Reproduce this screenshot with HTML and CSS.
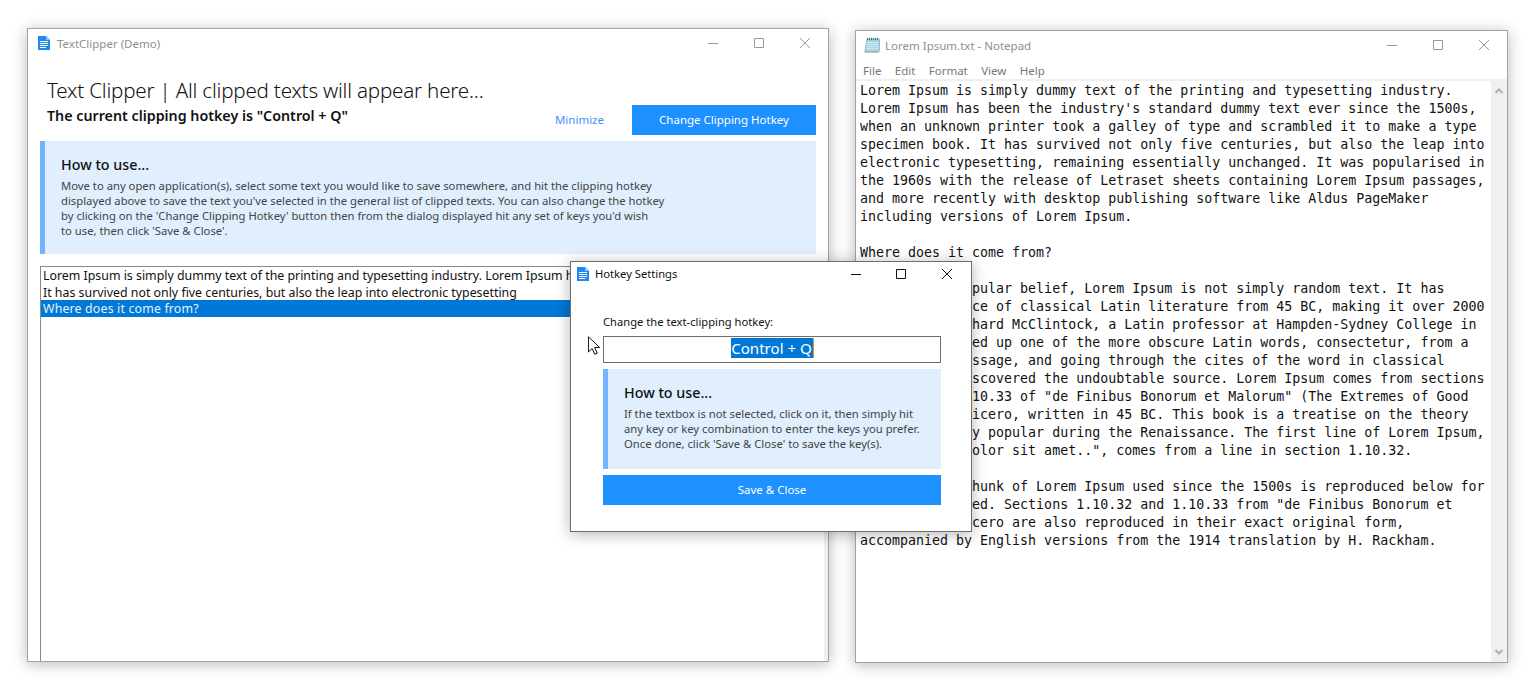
FILE: index.html
```html
<!DOCTYPE html>
<html lang="en">
<head>
<meta charset="utf-8">
<title>TextClipper</title>
<link rel="stylesheet" href="styles.css">
</head>
<body>
<div class="desktop">

  <section class="window main-window">
    <header class="titlebar">
      <svg class="app-icon" viewBox="0 0 12 14"><path d="M0 0h8l4 4v10H0z" fill="#1e88f5"/><path d="M8 0l4 4H8z" fill="#8cc4fb"/><path d="M2 5.500h8M2 7.500h8M2 9.500h8M2 11.500h6" stroke="#fff" stroke-width="1"/></svg>
      <span class="title inactive">TextClipper (Demo)</span>
      <div class="controls inactive-controls">
        <button class="ctl"><svg viewBox="0 0 10 10"><path d="M0 5.500h10"/></svg></button>
        <button class="ctl"><svg viewBox="0 0 10 10"><path d="M.5.5h9v9h-9z"/></svg></button>
        <button class="ctl"><svg viewBox="0 0 10 10"><path d="M0 0l10 10M10 0L0 10"/></svg></button>
      </div>
    </header>
    <div class="main-body">
      <div class="main-head">
        <div class="head-text">
          <h1 class="main-title">Text Clipper | All clipped texts will appear here...</h1>
          <p class="hotkey-line">The current clipping hotkey is "Control + Q"</p>
        </div>
        <div class="head-actions">
          <button class="link-btn">Minimize</button>
          <button class="primary-btn change-btn">Change Clipping Hotkey</button>
        </div>
      </div>
      <div class="info main-info">
        <h2 class="info-title">How to use...</h2>
        <p class="info-text">Move to any open application(s), select some text you would like to save somewhere, and hit the clipping hotkey<br>displayed above to save the text you've selected in the general list of clipped texts. You can also change the hotkey<br>by clicking on the 'Change Clipping Hotkey' button then from the dialog displayed hit any set of keys you'd wish<br>to use, then click 'Save &amp; Close'.</p>
      </div>
      <ul class="clip-list">
        <li>Lorem Ipsum is simply dummy text of the printing and typesetting industry. Lorem Ipsum has been the industry's standard</li>
        <li>It has survived not only five centuries, but also the leap into electronic typesetting</li>
        <li class="selected">Where does it come from?</li>
      </ul>
    </div>
  </section>

  <section class="window notepad">
    <header class="titlebar">
      <svg class="note-icon" viewBox="0 0 16 16"><path d="M3 2h12.500v11.500l-1 1.500H.8z" fill="#a6d7ea" stroke="#7fa9b8" stroke-width=".7"/><path d="M3 5.500h11.500M2.700 7.500h11.800M2.400 9.500h12.100M2.100 11.500h12.400" stroke="#c9e8f3" stroke-width=".9"/><path d="M1 15h13.500" stroke="#b9a27c" stroke-width="1"/><path d="M3.500.8v2.400M5.500.8v2.400M7.500.8v2.400M9.500.8v2.400M11.500.8v2.400M13.500.8v2.400" stroke="#4f5f68" stroke-width=".9"/></svg>
      <span class="title inactive">Lorem Ipsum.txt - Notepad</span>
      <div class="controls inactive-controls">
        <button class="ctl"><svg viewBox="0 0 10 10"><path d="M0 5.500h10"/></svg></button>
        <button class="ctl"><svg viewBox="0 0 10 10"><path d="M.5.5h9v9h-9z"/></svg></button>
        <button class="ctl"><svg viewBox="0 0 10 10"><path d="M0 0l10 10M10 0L0 10"/></svg></button>
      </div>
    </header>
    <nav class="menu">
      <span class="menu-item">File</span>
      <span class="menu-item">Edit</span>
      <span class="menu-item">Format</span>
      <span class="menu-item">View</span>
      <span class="menu-item">Help</span>
    </nav>
    <div class="note-body">
      <pre class="note-text">Lorem Ipsum is simply dummy text of the printing and typesetting industry.
Lorem Ipsum has been the industry's standard dummy text ever since the 1500s,
when an unknown printer took a galley of type and scrambled it to make a type
specimen book. It has survived not only five centuries, but also the leap into
electronic typesetting, remaining essentially unchanged. It was popularised in
the 1960s with the release of Letraset sheets containing Lorem Ipsum passages,
and more recently with desktop publishing software like Aldus PageMaker
including versions of Lorem Ipsum.

Where does it come from?

Contrary to popular belief, Lorem Ipsum is not simply random text. It has
roots in a piece of classical Latin literature from 45 BC, making it over 2000
years old. Richard McClintock, a Latin professor at Hampden-Sydney College in
Virginia, looked up one of the more obscure Latin words, consectetur, from a
Lorem Ipsum passage, and going through the cites of the word in classical
literature, discovered the undoubtable source. Lorem Ipsum comes from sections
1.10.32 and 1.10.33 of "de Finibus Bonorum et Malorum" (The Extremes of Good
and Evil) by Cicero, written in 45 BC. This book is a treatise on the theory
of ethics, very popular during the Renaissance. The first line of Lorem Ipsum,
"Lorem ipsum dolor sit amet..", comes from a line in section 1.10.32.

The standard chunk of Lorem Ipsum used since the 1500s is reproduced below for
those interested. Sections 1.10.32 and 1.10.33 from "de Finibus Bonorum et
Malorum" by Cicero are also reproduced in their exact original form,
accompanied by English versions from the 1914 translation by H. Rackham.</pre>
      <div class="scrollbar">
        <svg class="arrow" viewBox="0 0 8 6"><path d="M.5 5L4 1.500 7.500 5"/></svg>
        <svg class="arrow" viewBox="0 0 8 6"><path d="M.5 1L4 4.500 7.500 1"/></svg>
      </div>
    </div>
  </section>

  <section class="window dialog">
    <header class="titlebar dialog-bar">
      <svg class="app-icon" viewBox="0 0 12 14"><path d="M0 0h8l4 4v10H0z" fill="#1e88f5"/><path d="M8 0l4 4H8z" fill="#8cc4fb"/><path d="M2 5.500h8M2 7.500h8M2 9.500h8M2 11.500h6" stroke="#fff" stroke-width="1"/></svg>
      <span class="title">Hotkey Settings</span>
      <div class="controls">
        <button class="ctl"><svg viewBox="0 0 10 10"><path d="M0 5.500h10"/></svg></button>
        <button class="ctl"><svg viewBox="0 0 10 10"><path d="M.5.5h9v9h-9z"/></svg></button>
        <button class="ctl"><svg viewBox="0 0 10 10"><path d="M0 0l10 10M10 0L0 10"/></svg></button>
      </div>
    </header>
    <div class="dialog-body">
      <label class="field-label">Change the text-clipping hotkey:</label>
      <div class="hotkey-box"><span class="hotkey-sel">Control + Q</span></div>
      <div class="info dialog-info">
        <h2 class="info-title">How to use...</h2>
        <p class="info-text">If the textbox is not selected, click on it, then simply hit<br>any key or key combination to enter the keys you prefer.<br>Once done, click 'Save &amp; Close' to save the key(s).</p>
      </div>
      <button class="primary-btn save-btn">Save &amp; Close</button>
    </div>
  </section>

  <svg class="cursor" viewBox="0 0 13 21"><path d="M.5.500v16.500l4-3.800 2.800 6.300 2.700-1.200-2.800-6.100h5.500z" fill="#fff" stroke="#000" stroke-width="1"/></svg>
</div>
</body>
</html>
```
FILE: styles.css
```css
* { box-sizing: border-box; }
html, body { margin: 0; padding: 0; height: 100%; background: #fff; overflow: hidden; }
body { font-family: "Noto Sans", "Open Sans", sans-serif; color: #111; }
.desktop { position: relative; width: 1538px; height: 689px; overflow: hidden; }
button { font: inherit; border: 0; background: none; padding: 0; margin: 0; }
h1, h2, p, ul { margin: 0; padding: 0; }

.window {
  position: absolute;
  background: #fff;
  border: 1px solid #a3a3a3;
  box-shadow: 0 2px 14px rgba(0, 0, 0, .28);
  display: flex;
  flex-direction: column;
  overflow: hidden;
}
.main-window { left: 27px; top: 28px; width: 802px; height: 634px; }
.notepad { left: 855px; top: 30px; width: 653px; height: 633px; }
.dialog { left: 570px; top: 261px; width: 402px; height: 271px; border-color: #6e6e6e; box-shadow: 0 2px 14px rgba(0, 0, 0, .3); }

.titlebar { display: flex; align-items: center; height: 30px; padding-bottom: 2px; flex: none; }
.app-icon { width: 12px; height: 14px; margin-left: 10px; flex: none; }
.note-icon { width: 16px; height: 16px; margin-left: 8px; flex: none; }
.title { font-size: 11.5px; margin-left: 7px; color: #111; }
.title.inactive { color: #8f8f8f; }
.notepad .title { margin-left: 5px; }
.controls { display: flex; margin-left: auto; height: 28px; }
.ctl { width: 46px; height: 28px; display: flex; align-items: center; justify-content: center; }
.ctl svg { width: 10px; height: 10px; fill: none; stroke: #111; stroke-width: 1; }
.inactive-controls .ctl svg { stroke: #999; }

.main-body { flex: 1; display: flex; flex-direction: column; padding: 0 12px; min-height: 0; }
.main-head { display: flex; align-items: flex-end; justify-content: space-between; padding: 16px 0 6px 7px; height: 82px; }
.main-title { font-size: 20.6px; font-weight: 300; line-height: 30px; letter-spacing: -.2px; color: #111; white-space: nowrap; margin-bottom: 2px; }
.hotkey-line { font-size: 14.25px; font-weight: 600; line-height: 18px; white-space: nowrap; margin-bottom: 10px; }
.head-actions { display: flex; align-items: center; }
.link-btn { font-size: 11.5px; color: #3b93ff; margin-right: 28px; padding-bottom: 2px; }
.primary-btn { background: #1e90ff; color: #fff; font-size: 11.5px; height: 30px; display: block; padding-bottom: 2px; }
.change-btn { width: 184px; }

.info { background: #e0eefd; border-left: 5px solid #74b4ff; flex: none; }
.main-info { height: 113px; padding: 15px 16px 0; }
.info-title { font-size: 14.3px; font-weight: 500; line-height: 18px; color: #111; }
.info-text { font-size: 11.28px; line-height: 15px; color: #444; margin-top: 4px; white-space: nowrap; }

.clip-list {
  list-style: none;
  margin: 12px -12px 0 0;
  flex: 1;
  border: 1px solid #8a8a8a;
  border-right: 4px solid #f0f0f0;
  border-bottom: 0;
  font-size: 12.36px;
  background: #fff;
  overflow: hidden;
}
.clip-list li { height: 16.6px; line-height: 17px; padding-left: 2px; white-space: nowrap; }
.clip-list li.selected { background: #0078d7; color: #e4f1fc; line-height: 18px; letter-spacing: .16px; }

.menu { display: flex; height: 18px; padding: 1px 0 0 .3px; align-items: center; flex: none; }
.menu-item { font-size: 11.5px; color: #777; padding: 0 6.7px; }
.note-body { flex: 1; display: flex; min-height: 0; }
.note-text {
  flex: 1;
  margin: 0;
  padding: 1px 0 0 4px;
  border-top: 2px solid #f0f0f0;
  font-family: "DejaVu Sans Mono", monospace;
  font-size: 13.3px;
  line-height: 18px;
  color: #111;
  overflow: hidden;
}
.scrollbar { width: 16px; background: #f0f0f0; display: flex; flex-direction: column; justify-content: space-between; align-items: center; padding: 9px 0 7px; }
.arrow { width: 8px; height: 6px; fill: none; stroke: #b0b0b0; stroke-width: 2; }

.dialog-bar { height: 24px; padding-bottom: 0; }
.dialog-bar .title { font-size: 11.2px; margin-left: 6px; padding-bottom: 2px; }
.dialog-bar .controls { height: 24px; margin-right: 1px; }
.dialog-bar .ctl { height: 24px; }
.dialog-bar .ctl:first-child { margin-right: -1px; }
.dialog-bar .app-icon { margin-left: 6px; }
.dialog-body { flex: 1; padding: 28px 30px 0 32px; display: flex; flex-direction: column; }
.field-label { font-size: 11.2px; line-height: 16px; color: #111; }
.hotkey-box { height: 27px; border: 1px solid #6e6e6e; margin-top: 6px; padding: 0 0 3px 1px; display: flex; align-items: center; justify-content: center; font-size: 15.1px; }
.hotkey-sel { background: #0078d7; color: #fff; line-height: 20px; padding-right: 1px; border-right: 1px solid #f08a24; }
.dialog-info { height: 100px; margin-top: 6px; padding: 15px 16px 0; }
.save-btn { margin-top: 6px; width: 100%; }

.cursor { position: absolute; left: 588px; top: 336px; width: 12px; height: 20px; }
```
